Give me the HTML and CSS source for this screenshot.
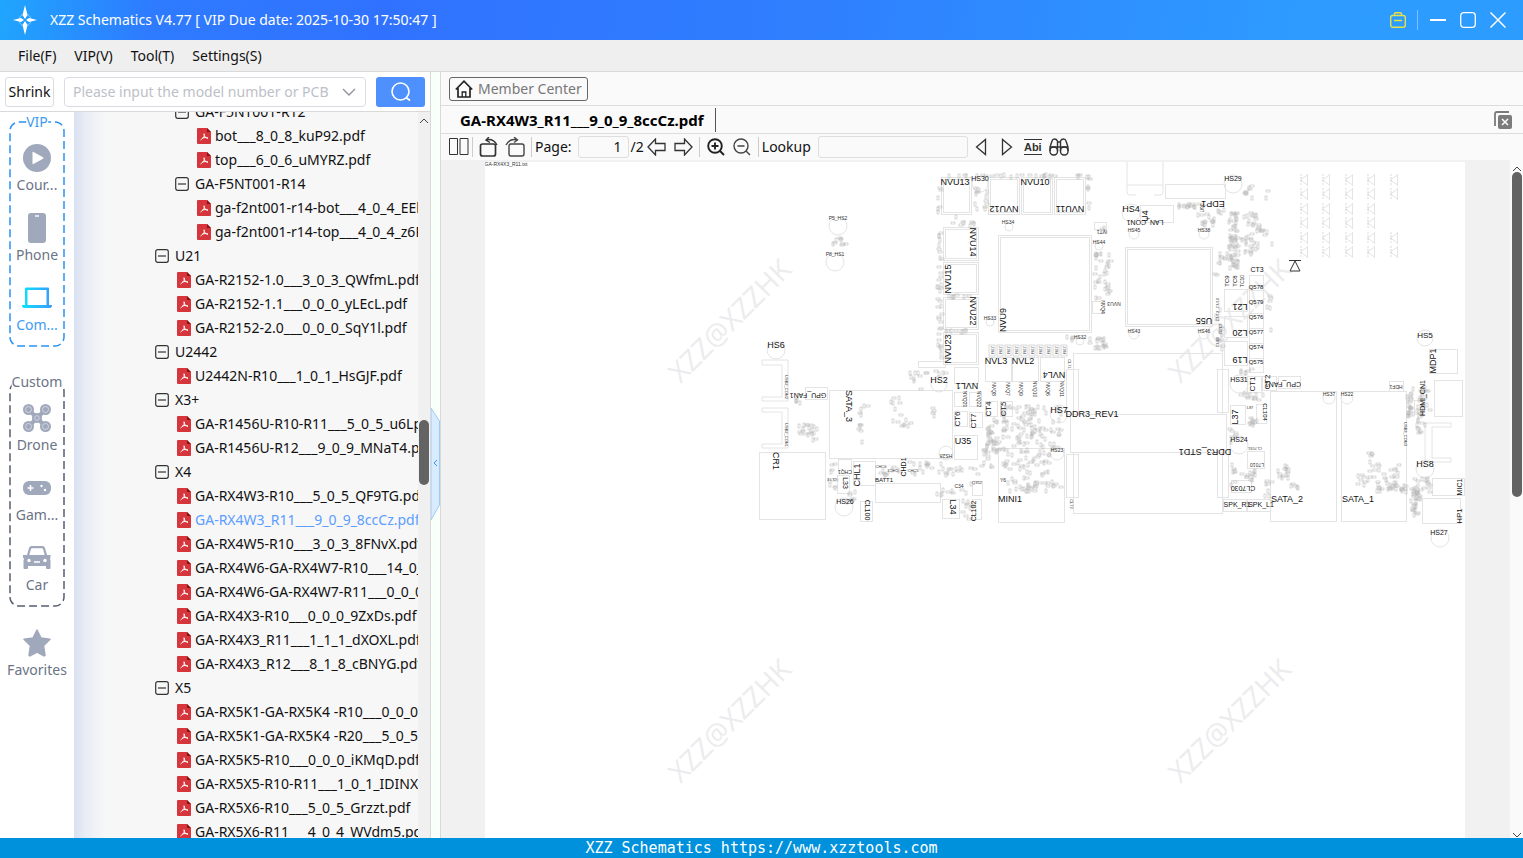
FILE: index.html
```
<!DOCTYPE html>
<html lang="en">

<head>
  <meta charset="utf-8">
  <title>XZZ Schematics V4.77</title>
  <link rel="stylesheet" href="styles.css">
</head>

<body>
  <svg class="sprite" aria-hidden="true">
    <symbol id="pdf" viewBox="0 0 14 16">
      <path d="M1 0h9l4 4v11a1 1 0 0 1-1 1H1a1 1 0 0 1-1-1V1a1 1 0 0 1 1-1z" fill="#d6353b" />
      <path d="M10 0l4 4h-4z" fill="#8e1015" />
      <path d="M7 5.5c1 2 .3 3.500-3.500 6.500M7 6c0 2.500 1.500 4 4 4.200M5.200 10.400c2-1 3.800-1.200 5.800-.2" fill="none" stroke="#fff" stroke-width="1" />
    </symbol>
    <symbol id="minus" viewBox="0 0 14 14">
      <rect x=".7" y=".7" width="12.6" height="12.6" rx="2" fill="none" stroke="#333" stroke-width="1.2" />
      <path d="M3 7h8" stroke="#333" stroke-width="1.2" />
    </symbol>
  </svg>

  <header class="titlebar">
    <svg class="logo" width="26" height="30" viewBox="0 0 26 30">
      <circle cx="13" cy="15" r="6" fill="none" stroke="#bfe0ff" stroke-width="1" opacity=".6" />
      <path d="M13 0l2.500 10-2.500 4-2.500-4zM13 30l2.500-10-2.500-4-2.500 4zM1 15l8-2 3 2-3 2zM25 15l-8-2-3 2 3 2z" fill="#fff" />
    </svg>
    <h1>XZZ Schematics V4.77 [ VIP Due date: 2025-10-30 17:50:47 ]</h1>
    <button class="win" title="Toolbox">
      <svg width="16" height="16" viewBox="0 0 16 16" fill="none" stroke="#e6e04a" stroke-width="1.4">
        <rect x=".7" y="3.5" width="14.6" height="11.8" rx="2" />
        <path d="M4.500 3.500V2q0-1.300 1.300-1.300h4.400q1.300 0 1.300 1.300v1.500M4 8.500h8" />
      </svg>
    </button>
    <span class="win-line"></span>
    <button class="win" title="Minimize">
      <svg width="16" height="16" viewBox="0 0 16 16"><path d="M0 8h16" stroke="#fff" stroke-width="2" /></svg>
    </button>
    <button class="win" title="Maximize">
      <svg width="16" height="16" viewBox="0 0 16 16"><rect x=".7" y=".7" width="14.6" height="14.6" rx="3" fill="none" stroke="#fff" stroke-width="1.3" /></svg>
    </button>
    <button class="win" title="Close">
      <svg width="16" height="16" viewBox="0 0 16 16"><path d="M.5.5l15 15M15.500.5l-15 15" stroke="#fff" stroke-width="1.5" /></svg>
    </button>
  </header>

  <nav class="menubar">
    <a href="#file">File(F)</a>
    <a href="#vip">VIP(V)</a>
    <a href="#tool">Tool(T)</a>
    <a href="#settings">Settings(S)</a>
  </nav>

  <main class="main">
    <section class="left">
      <form class="search">
        <button type="button" class="shrink">Shrink</button>
        <div class="combo">
          <input type="text" aria-label="Model number" placeholder="Please input the model number or PCB">
          <svg width="14" height="8" viewBox="0 0 14 8"><path d="M1 1l6 6 6-6" fill="none" stroke="#8f939b" stroke-width="1.4" /></svg>
        </div>
        <button type="button" class="go" title="Search">
          <svg width="20" height="20" viewBox="0 0 20 20" fill="none" stroke="#fff" stroke-width="1.6"><circle cx="9.5" cy="9.5" r="8.5" /><path d="M15 15.500l4 3" /></svg>
        </button>
      </form>

      <div class="browse">
        <nav class="side">
          <div class="group vip">
            <svg class="dash"><rect x="1" y="1" rx="9" /></svg>
            <h2>VIP</h2>
            <a href="#courses">
              <svg width="28" viewBox="0 0 28 28"><circle cx="14" cy="14" r="14" fill="#a0a8bc" /><path d="M9.500 8.500v11q0 1.200 1 .6l9.500-5.400q1-.7 0-1.400l-9.500-5.400q-1-.6-1 .6z" fill="#fff" /></svg>
              Cour...
            </a>
            <a href="#phone">
              <svg width="28" viewBox="0 0 28 30"><rect x="5" y="0" width="18" height="30" rx="3" fill="#a0a8bc" /><path d="M12 3h4" stroke="#fff" stroke-width="1.4" /></svg>
              Phone
            </a>
            <a href="#computer" class="on">
              <svg width="30" viewBox="0 0 30 22">
                <defs><linearGradient id="blue"><stop offset="0" stop-color="#08e4fb" /><stop offset="1" stop-color="#3a9bff" /></linearGradient></defs>
                <path d="M3 1.500Q3 .5 4 .5h22q1 0 1 1V18h3q0 3-2 3H2q-2 0-2-3h3zm2.500 1.500v15h19V3z" fill="url(#blue)" fill-rule="evenodd" />
              </svg>
              Com...
            </a>
          </div>

          <div class="group custom">
            <svg class="dash"><rect x="1" y="1" rx="9" /></svg>
            <h2>Custom</h2>
            <a href="#drone">
              <svg width="28" viewBox="0 0 28 28">
                <path d="M5 5l18 18M23 5L5 23" stroke="#a0a8bc" stroke-width="4" />
                <g fill="#a0a8bc"><circle cx="5.5" cy="5.5" r="5.5" /><circle cx="22.5" cy="5.5" r="5.5" /><circle cx="5.5" cy="22.5" r="5.5" /><circle cx="22.5" cy="22.5" r="5.5" /><circle cx="14" cy="14" r="5" /></g>
                <g fill="none" stroke="#e3e6ec" stroke-width=".7"><circle cx="5.5" cy="5.5" r="3" /><circle cx="22.5" cy="5.5" r="3" /><circle cx="5.5" cy="22.5" r="3" /><circle cx="22.5" cy="22.5" r="3" /><circle cx="14" cy="14" r="2.3" /></g>
              </svg>
              Drone
            </a>
            <a href="#game">
              <svg width="28" viewBox="0 0 28 14"><rect width="28" height="14" rx="6" fill="#a0a8bc" /><path d="M4.500 7h6M7.500 4v6" stroke="#fff" stroke-width="1.5" /><circle cx="18.5" cy="5" r="1.2" fill="#fff" /><circle cx="22" cy="9" r="1.2" fill="#fff" /></svg>
              Gam...
            </a>
            <a href="#car">
              <svg width="28" viewBox="0 0 28 24">
                <path d="M4 9l2-7q.6-2 2.500-2h11q2 0 2.500 2l2 7h3.500v3H27l.5 3v7q0 1-1 1h-2.500q-1 0-1-1v-2H5v2q0 1-1 1H1.500q-1 0-1-1v-7l.5-3H0V9z" fill="#a0a8bc" />
                <path d="M6.300 9l1.700-6q.2-.7 1-.7h10q.8 0 1 .7l1.700 6z" fill="#fff" />
                <circle cx="6" cy="14.5" r="1.7" fill="#fff" /><circle cx="22" cy="14.5" r="1.7" fill="#fff" /><path d="M11 16h6" stroke="#fff" stroke-width="1.5" />
              </svg>
              Car
            </a>
          </div>

          <a href="#favorites" class="favorites">
            <svg width="28" viewBox="0 0 28 28"><path d="M14 1l4 8 9 1.300-6.500 6.300L22 26q0 1-1 .8l-7-3.700-7 3.700q-1 .2-1-.8l1.500-9.400L1 10.300 10 9z" fill="#a0a8bc" stroke="#a0a8bc" stroke-width="1.5" stroke-linejoin="round" /></svg>
            Favorites
          </a>
        </nav>

        <div class="tree">
          <ul class="folders">
            <li>
              <ul class="sub">
                <li><span class="folder"><svg><use href="#minus" /></svg>GA-F5NT001-R12</span>
                  <ul>
                    <li><svg><use href="#pdf" /></svg>bot___8_0_8_kuP92.pdf</li>
                    <li><svg><use href="#pdf" /></svg>top___6_0_6_uMYRZ.pdf</li>
                  </ul>
                </li>
                <li><span class="folder"><svg><use href="#minus" /></svg>GA-F5NT001-R14</span>
                  <ul>
                    <li><svg><use href="#pdf" /></svg>ga-f2nt001-r14-bot___4_0_4_EEkQs.pdf</li>
                    <li><svg><use href="#pdf" /></svg>ga-f2nt001-r14-top___4_0_4_z6Rtm.pdf</li>
                  </ul>
                </li>
              </ul>
            </li>
            <li><span class="folder"><svg><use href="#minus" /></svg>U21</span>
              <ul>
                <li><svg><use href="#pdf" /></svg>GA-R2152-1.0___3_0_3_QWfmL.pdf</li>
                <li><svg><use href="#pdf" /></svg>GA-R2152-1.1___0_0_0_yLEcL.pdf</li>
                <li><svg><use href="#pdf" /></svg>GA-R2152-2.0___0_0_0_SqY1l.pdf</li>
              </ul>
            </li>
            <li><span class="folder"><svg><use href="#minus" /></svg>U2442</span>
              <ul>
                <li><svg><use href="#pdf" /></svg>U2442N-R10___1_0_1_HsGJF.pdf</li>
              </ul>
            </li>
            <li><span class="folder"><svg><use href="#minus" /></svg>X3+</span>
              <ul>
                <li><svg><use href="#pdf" /></svg>GA-R1456U-R10-R11___5_0_5_u6LpD.pdf</li>
                <li><svg><use href="#pdf" /></svg>GA-R1456U-R12___9_0_9_MNaT4.pdf</li>
              </ul>
            </li>
            <li><span class="folder"><svg><use href="#minus" /></svg>X4</span>
              <ul>
                <li><svg><use href="#pdf" /></svg>GA-RX4W3-R10___5_0_5_QF9TG.pdf</li>
                <li class="current"><svg><use href="#pdf" /></svg>GA-RX4W3_R11___9_0_9_8ccCz.pdf</li>
                <li><svg><use href="#pdf" /></svg>GA-RX4W5-R10___3_0_3_8FNvX.pdf</li>
                <li><svg><use href="#pdf" /></svg>GA-RX4W6-GA-RX4W7-R10___14_0_14.pdf</li>
                <li><svg><use href="#pdf" /></svg>GA-RX4W6-GA-RX4W7-R11___0_0_0.pdf</li>
                <li><svg><use href="#pdf" /></svg>GA-RX4X3-R10___0_0_0_9ZxDs.pdf</li>
                <li><svg><use href="#pdf" /></svg>GA-RX4X3_R11___1_1_1_dXOXL.pdf</li>
                <li><svg><use href="#pdf" /></svg>GA-RX4X3_R12___8_1_8_cBNYG.pdf</li>
              </ul>
            </li>
            <li><span class="folder"><svg><use href="#minus" /></svg>X5</span>
              <ul>
                <li><svg><use href="#pdf" /></svg>GA-RX5K1-GA-RX5K4 -R10___0_0_0.pdf</li>
                <li><svg><use href="#pdf" /></svg>GA-RX5K1-GA-RX5K4 -R20___5_0_5.pdf</li>
                <li><svg><use href="#pdf" /></svg>GA-RX5K5-R10___0_0_0_iKMqD.pdf</li>
                <li><svg><use href="#pdf" /></svg>GA-RX5X5-R10-R11___1_0_1_IDINX.pdf</li>
                <li><svg><use href="#pdf" /></svg>GA-RX5X6-R10___5_0_5_Grzzt.pdf</li>
                <li><svg><use href="#pdf" /></svg>GA-RX5X6-R11___4_0_4_WVdm5.pdf</li>
              </ul>
            </li>
          </ul>
        </div>

        <div class="scroll tree-scroll">
          <svg width="10" height="6" viewBox="0 0 10 6"><path d="M1 5l4-4 4 4" fill="none" stroke="#444" /></svg>
          <span class="thumb"></span>
        </div>
      </div>
    </section>

    <div class="splitter">
      <svg width="9" height="112" viewBox="0 0 9 112"><path d="M0 0l8.500 13v84L0 112z" fill="#d9ebff" stroke="#9dcbf8" /><path d="M6 52l-3 3 3 3" fill="none" stroke="#3f9bf0" /></svg>
    </div>

    <section class="right">
      <div class="member-row">
        <button class="member">
          <svg width="18" height="18" viewBox="0 0 18 18" fill="none" stroke="#222" stroke-width="1.7"><path d="M.8 9.500L9 1.200l8.200 8.300M3 8v9h12V8" /><path d="M7.200 17v-5h3.600v5" stroke-width="1.3" /></svg>
          Member Center
        </button>
      </div>

      <div class="tabs">
        <a href="#doc" class="tab">GA-RX4W3_R11___9_0_9_8ccCz.pdf</a>
        <button class="icon" title="Close all">
          <svg width="18" height="18" viewBox="0 0 18 18"><path d="M1 15V3q0-2 2-2h12" fill="none" stroke="#7b7b7b" stroke-width="1.8" /><rect x="4" y="4" width="14" height="14" rx="2" fill="#7b7b7b" /><path d="M8 8l6 6M14 8l-6 6" stroke="#fff" stroke-width="1.5" /></svg>
        </button>
      </div>

      <div class="toolbar">
        <button class="icon" title="Two pages"><svg width="20" height="18" viewBox="0 0 20 18" fill="none" stroke="#333"><path d="M.5.5h8v16h-8zM11 .5h8v16h-8z" /></svg></button>
        <i class="sep"></i>
        <button class="icon" title="Rotate left"><svg width="20" height="20" viewBox="0 0 20 20" fill="none" stroke="#333" stroke-width="1.7"><rect x="1.5" y="7" width="15" height="12" rx="2" /><path d="M7 3q7-2 11 5M10 0L7 3l4 2.500" stroke-width="1.4" /></svg></button>
        <button class="icon" title="Rotate right"><svg width="20" height="20" viewBox="0 0 20 20" fill="none" stroke="#444" stroke-width="1.4"><rect x="4" y="7" width="15" height="12" rx="2" /><path d="M1 8q4-7 11-5M9 0l3.500 3L9 5.500" /></svg></button>
        <i class="sep"></i>
        <label for="page">Page:</label>
        <input id="page" class="page-no" type="text" value="1">
        <span class="total">/2</span>
        <button class="icon" title="Previous page"><svg width="20" height="18" viewBox="0 0 20 18" fill="none" stroke="#333" stroke-width="1.3"><path d="M1 9l7.500-8v4.500H18v7H8.500V17z" /></svg></button>
        <button class="icon" title="Next page"><svg width="20" height="18" viewBox="0 0 20 18" fill="none" stroke="#333" stroke-width="1.3"><path d="M19 9l-7.500-8v4.500H2v7h9.500V17z" /></svg></button>
        <i class="sep"></i>
        <button class="icon" title="Zoom in"><svg width="18" height="18" viewBox="0 0 18 18" fill="none" stroke="#222" stroke-width="1.9"><circle cx="8" cy="8" r="6.8" /><path d="M4.500 8h7M8 4.500v7M13 13l4 4" /></svg></button>
        <button class="icon" title="Zoom out"><svg width="18" height="18" viewBox="0 0 18 18" fill="none" stroke="#444" stroke-width="1.4"><circle cx="8" cy="8" r="7" /><path d="M4.500 8h7M13 13l4 4" /></svg></button>
        <i class="sep"></i>
        <label for="lookup">Lookup</label>
        <input id="lookup" class="lookup" type="text">
        <button class="icon" title="Find previous"><svg width="12" height="18" viewBox="0 0 12 18" fill="none" stroke="#333" stroke-width="1.3"><path d="M10.500 1.500v15L1.500 9z" /></svg></button>
        <button class="icon" title="Find next"><svg width="12" height="18" viewBox="0 0 12 18" fill="none" stroke="#333" stroke-width="1.3"><path d="M1.500 1.500v15l9-7.500z" /></svg></button>
        <button class="icon abi" title="Match case">Abi</button>
        <button class="icon" title="Find all"><svg width="20" height="18" viewBox="0 0 20 18" fill="none" stroke="#333" stroke-width="1.4"><rect x="1" y="9" width="7.5" height="8" rx="3.5" /><rect x="11.5" y="9" width="7.5" height="8" rx="3.5" /><path d="M1 13V9l2-6q.5-2 2.500-2T8.500 3v10M19 13V9l-2-6q-.5-2-2.500-2t-3 2v10M1.500 9h17M8.500 4h3" /></svg></button>
      </div>

      <div class="viewer">
        <div class="paper">
          <svg id="board" viewBox="485 162 980 676" preserveAspectRatio="xMinYMin meet"></svg>
        </div>
        <div class="scroll view-scroll">
          <svg width="10" height="6" viewBox="0 0 10 6"><path d="M1 5l4-4 4 4" fill="none" stroke="#444" /></svg>
          <span class="thumb"></span>
          <svg width="10" height="6" viewBox="0 0 10 6"><path d="M1 1l4 4 4-4" fill="none" stroke="#444" /></svg>
        </div>
      </div>
    </section>
  </main>

  <footer class="footer">XZZ Schematics https://www.xzztools.com</footer>

  <script src="board.js"></script>
</body>

</html>
```

FILE: styles.css
```
* {
  box-sizing: border-box;
}

body {
  margin: 0;
  height: 100vh;
  display: flex;
  flex-direction: column;
  overflow: hidden;
  font: 14px/24px "Noto Sans", "Open Sans", sans-serif;
  color: #111;
  background: #fff;
}

button,
input {
  font: inherit;
  color: inherit;
}

a {
  color: inherit;
  text-decoration: none;
}

ul {
  list-style: none;
  margin: 0;
  padding: 0;
}

svg {
  flex: none;
  display: block;
}

.sprite {
  position: absolute;
  width: 0;
  height: 0;
}

.titlebar {
  height: 40px;
  flex: none;
  display: flex;
  align-items: center;
  padding: 0 10px 0 12px;
  color: #fff;
  background: linear-gradient(100deg, #1fa6fd 0, #2e7bff 10%, #3072ff 25%, #2f80ff 55%, #2d9bff 85%, #2d9cff 100%);
}

.titlebar h1 {
  flex: 1;
  margin: 0 0 0 12px;
  font-size: 14px;
  font-weight: 400;
}

.win {
  border: 0;
  background: none;
  padding: 0;
  width: 30px;
  display: flex;
  justify-content: center;
}

.win-line {
  width: 1px;
  height: 20px;
  margin: 0 5px 0 4px;
  background: #7fc0ff;
}

.menubar {
  height: 32px;
  flex: none;
  display: flex;
  align-items: center;
  gap: 18px;
  padding: 1px 18px 0;
  background: #efefef;
  border-bottom: 1px solid #d9d9d9;
}

.main {
  flex: 1;
  min-height: 0;
  display: flex;
}

/* left panel */

.left {
  width: 431px;
  flex: none;
  display: flex;
  flex-direction: column;
  border-right: 1px solid #d9d9d9;
}

.search {
  height: 40px;
  flex: none;
  display: flex;
  align-items: center;
  gap: 10px;
  padding: 0 5px;
  border-bottom: 1px solid #d9d9d9;
}

.shrink {
  width: 49px;
  height: 30px;
  padding: 0;
  background: #fff;
  border: 1px solid #d9dce3;
  border-radius: 3px;
}

.combo {
  flex: 1;
  display: flex;
  align-items: center;
  height: 30px;
  padding: 0 9px 0 8px;
  border: 1px solid #d9dce3;
  border-radius: 4px;
}

.combo input {
  flex: 1;
  min-width: 0;
  padding: 0;
  border: 0;
  outline: 0;
}

.combo input::placeholder {
  color: #bcc0c8;
}

.go {
  width: 49px;
  height: 30px;
  display: flex;
  align-items: center;
  justify-content: center;
  border: 0;
  border-radius: 3px;
  background: #4f90ff;
}

.browse {
  flex: 1;
  min-height: 0;
  display: flex;
}

.side {
  width: 74px;
  flex: none;
  padding: 0 9px;
  color: #6b7385;
}

.side a {
  position: relative;
  height: 70px;
  display: flex;
  flex-direction: column;
  align-items: center;
  justify-content: flex-end;
}

.side a svg {
  height: 30px;
}

.side a.on {
  color: #3d9bf0;
}

.group {
  position: relative;
  width: 56px;
  padding-bottom: 10px;
}

.group h2 {
  position: relative;
  width: max-content;
  height: 20px;
  margin: 0 -4px -5px 50%;
  transform: translateX(-50%);
  font-size: 14px;
  line-height: 20px;
  font-weight: 400;
  background: #fff;
}

.vip h2 {
  color: #3d9bf0;
}

.dash {
  position: absolute;
  left: 0;
  top: 9px;
  width: 56px;
  height: calc(100% - 9px);
}

.dash rect {
  width: calc(100% - 2px);
  height: calc(100% - 2px);
  fill: none;
  stroke: #555d70;
  stroke-width: 1.5;
  stroke-dasharray: 8 4;
}

.vip .dash rect {
  stroke: #2b92f5;
}

.custom {
  margin-top: 25px;
}

.side .favorites {
  margin: 5px -9px 0;
}

.tree {
  flex: 1;
  min-width: 0;
  overflow: hidden;
  padding-left: 80px;
  background: linear-gradient(90deg, #d8e1f1 0, #e9edf4 12px, #f7f7f8 32px);
  white-space: nowrap;
}

/* list is scrolled by half a row */
.folders {
  margin-top: -12px;
}

.sub {
  padding-left: 20px;
}

.folder,
.folder + ul li {
  display: flex;
  align-items: center;
  height: 24px;
}

.folder {
  gap: 5px;
}

.folder + ul {
  padding-left: 22px;
}

.folder + ul li {
  gap: 3px;
}

.tree svg {
  width: 16px;
  height: 14px;
}

.folder + ul svg {
  height: 16px;
}

.tree .current {
  color: #5c9dff;
}

.scroll {
  position: relative;
  flex: none;
  display: flex;
  flex-direction: column;
  align-items: center;
  justify-content: space-between;
}

.thumb {
  position: absolute;
  width: 10px;
  border-radius: 5px;
  background: #636363;
}

.tree-scroll {
  width: 12px;
  padding-top: 6px;
  background: #f0f0f0;
}

.tree-scroll .thumb {
  top: 42.4%;
  height: 9%;
}

.splitter {
  width: 9px;
  flex: none;
  display: flex;
  align-items: center;
  padding-top: 18px;
  background: #f9fff9;
}

/* document side */

.right {
  flex: 1;
  min-width: 0;
  display: flex;
  flex-direction: column;
  background: #fafafa;
  border-left: 1px solid #d9d9d9;
}

.member-row {
  height: 34px;
  flex: none;
  display: flex;
  align-items: center;
  padding-left: 8px;
  border-bottom: 1px solid #dcdcdc;
}

.member {
  height: 24px;
  display: flex;
  align-items: center;
  gap: 5px;
  padding: 0 5px;
  background: #fafafa;
  border: 1px solid #666;
  border-radius: 3px;
  color: #777;
}

.tabs {
  height: 28px;
  flex: none;
  display: flex;
  align-items: center;
  justify-content: space-between;
  padding: 0 11px 0 19px;
  border-bottom: 1px solid #dcdcdc;
}

.tab {
  padding-right: 11px;
  border-right: 1px solid #555;
  font-size: 15px;
  font-weight: 700;
  color: #000;
}

.toolbar {
  height: 26px;
  flex: none;
  display: flex;
  align-items: center;
  padding-left: 8px;
}

.icon {
  border: 0;
  padding: 0;
  background: none;
  display: flex;
}

.toolbar .icon {
  width: 26px;
  justify-content: center;
}

.toolbar .icon:first-child {
  width: 20px;
}

.sep {
  width: 1px;
  height: 20px;
  margin: 0 3px;
  background: #ccc;
}

.toolbar input {
  height: 22px;
  border: 1px solid #dedede;
  border-radius: 3px;
  background: #fafafa;
}

.page-no {
  width: 51px;
  margin-left: 6px;
  padding: 0 6px;
  text-align: right;
}

.total {
  padding-left: 2px;
}

.lookup {
  width: 150px;
  margin-left: 7px;
}

.toolbar .abi {
  width: 18px;
  height: 16px;
  margin: 0 4px;
  border-top: 1px solid #333;
  border-bottom: 1px solid #333;
  font: 700 11px/14px "Liberation Sans", sans-serif;
  color: #333;
}

.viewer {
  flex: 1;
  min-height: 0;
  display: flex;
  padding-left: 44px;
  background: #f1f1f1;
}

.paper {
  flex: 1;
  min-width: 0;
  margin: 2px 45px 0 0;
  background: #fff;
  overflow: hidden;
}

#board {
  width: 100%;
}

#board text {
  font-family: "Liberation Sans", Arial, sans-serif;
  text-anchor: middle;
  dominant-baseline: central;
  fill: #111;
}

#board .small {
  fill: #333;
}

#board .mark {
  font: 400 28px "Open Sans", sans-serif;
  fill: #ececee;
}

#board .line {
  fill: none;
  stroke: #e4e4e4;
}

#board .part {
  fill: none;
  stroke: #b4b4b4;
  stroke-width: .5;
}

.view-scroll {
  width: 13px;
  padding: 6px 0 0;
  background: #fafafa;
}

.view-scroll .thumb {
  top: 12px;
  height: 48%;
}

.footer {
  height: 20px;
  flex: none;
  background: #0091dc;
  color: #fff;
  text-align: center;
  font: 15px/20px "DejaVu Sans Mono", monospace;
}
```

FILE: board.js
```
var board = document.getElementById('board');
var NS = 'http://www.w3.org/2000/svg';

function add(tag, attrs, text) {
  var el = document.createElementNS(NS, tag);
  for (var key in attrs) {
    el.setAttribute(key, attrs[key]);
  }
  if (text) {
    el.textContent = text;
  }
  board.appendChild(el);
}

// fixed seed, so the small parts always land in the same place
var seed = 7;
function rand() {
  seed = (seed * 16807) % 2147483647;
  return seed / 2147483647;
}

// watermarks
[[729, 320], [1229, 320], [729, 720], [1229, 720]].forEach(p => {
  add('text', { class: 'mark', x: p[0], y: p[1], transform: `rotate(-45 ${p[0]} ${p[1]})` }, 'XZZ@XZZHK');
});

// chips with a double outline: x, y, w, h
[
  [941, 177, 30, 37], [988, 177, 31, 37], [1021, 177, 31, 37], [1054, 177, 31, 37],
  [943, 227, 35, 33], [943, 262, 35, 32], [943, 297, 35, 32], [943, 332, 35, 32],
  [998, 235, 93, 97], [1125, 247, 87, 79]
].forEach(r => {
  add('rect', { class: 'line', x: r[0] + .5, y: r[1] + .5, width: r[2], height: r[3] });
  add('rect', { class: 'line', x: r[0] + 2.5, y: r[1] + 2.5, width: r[2] - 4, height: r[3] - 4 });
});

// plain outlines
[
  [829, 390, 123, 68], [759, 452, 66, 67], [853, 461, 22, 24], [875, 483, 65, 19], [805, 387, 22, 12],
  [838, 459, 13, 14], [837, 475, 12, 18], [954, 435, 23, 24], [998, 448, 66, 74], [985, 357, 26, 24],
  [1012, 357, 26, 24], [1040, 357, 24, 24], [954, 367, 24, 16], [942, 499, 17, 19], [860, 501, 12, 20],
  [972, 499, 9, 20], [972, 481, 10, 14], [954, 392, 12, 14], [969, 392, 12, 14], [954, 411, 13, 15],
  [969, 412, 13, 15], [985, 401, 12, 15], [1000, 401, 12, 15], [1073, 353, 149, 61], [1073, 452, 149, 61],
  [1066, 369, 12, 45], [1066, 454, 12, 43], [1217, 369, 11, 43], [1217, 450, 11, 47], [1070, 414, 156, 38],
  [1165, 184, 60, 14], [1140, 205, 33, 17], [1094, 222, 12, 7], [1092, 301, 12, 12], [1249, 275, 14, 15],
  [1249, 290, 14, 23], [1249, 313, 14, 15], [1249, 328, 14, 15], [1249, 343, 14, 15], [1249, 358, 14, 14],
  [1224, 289, 23, 22], [1224, 316, 23, 21], [1224, 341, 23, 24], [1230, 405, 15, 19], [1247, 376, 14, 16],
  [1278, 376, 22, 12], [1262, 376, 14, 14], [1256, 404, 10, 19], [1247, 451, 17, 17], [1231, 480, 20, 12],
  [1223, 499, 23, 12], [1247, 499, 23, 12], [1270, 391, 66, 130], [1341, 391, 65, 130], [1429, 349, 28, 24],
  [1434, 380, 28, 36], [1389, 381, 14, 10], [1432, 478, 32, 17], [1422, 498, 38, 25], [918, 361, 27, 6],
  [1414, 400, 8, 14]
].forEach(r => add('rect', { class: 'line', x: r[0] + .5, y: r[1] + .5, width: r[2], height: r[3] }));

// connectors
[
  'M762 360h26v41h-26v-4h20v-32h-20z',
  'M762 408h26v40h-26v-4h20v-32h-20z',
  'M1425 423h26v4h-19v31h19v4h-26z',
  'M1127 162v30q0 3 3 3h6M1163 162v30q0 3-3 3h-6M1127 185h36'
].forEach(d => add('path', { class: 'line', d: d }));

// screw holes: x, y, r
[
  [980, 184, 8], [838, 226, 9], [835, 262, 9], [1009, 227, 4], [990, 322, 4], [1099, 246, 4], [1080, 341, 4],
  [776, 350, 9], [939, 384, 8], [844, 507, 9], [946, 453, 7], [1059, 414, 9], [1057, 453, 7], [1131, 213, 9],
  [1233, 184, 9], [1134, 234, 5], [1204, 234, 5], [1134, 334, 5], [1204, 334, 5], [1239, 384, 9],
  [1239, 445, 9], [1425, 338, 8], [1425, 469, 9], [1440, 538, 9], [1329, 398, 6], [1347, 398, 6]
].forEach(c => add('circle', { class: 'line', cx: c[0], cy: c[1], r: c[2] }));

// areas filled with small parts: x, y, w, h, count
[
  [940, 173, 150, 2, 26], [937, 182, 2, 30, 6], [973, 185, 3, 25, 7], [983, 190, 3, 18, 6], [1085, 174, 3, 32, 8],
  [936, 228, 4, 30, 9], [936, 264, 4, 28, 9], [936, 298, 4, 30, 10], [937, 333, 4, 25, 8], [944, 214, 30, 10, 9],
  [945, 294, 25, 1, 7], [945, 329, 28, 1, 8], [1093, 250, 16, 50, 34], [1088, 334, 18, 14, 18],
  [1064, 334, 12, 6, 4], [797, 422, 20, 18, 20], [789, 398, 10, 3, 4], [856, 392, 12, 20, 3], [857, 410, 4, 32, 8],
  [889, 396, 12, 18, 7], [891, 418, 18, 8, 8], [908, 368, 12, 20, 8], [922, 370, 24, 3, 6], [931, 406, 6, 12, 4],
  [985, 418, 13, 34, 32], [1000, 405, 46, 36, 70], [1002, 440, 46, 50, 70], [1048, 405, 14, 46, 16],
  [980, 440, 14, 26, 14], [1022, 480, 40, 10, 14], [876, 461, 10, 14, 6], [888, 466, 10, 6, 4],
  [908, 460, 24, 12, 10], [828, 460, 8, 36, 9], [845, 490, 12, 12, 7], [922, 460, 24, 14, 7],
  [944, 466, 34, 8, 12], [940, 480, 36, 12, 7], [958, 498, 14, 20, 10], [935, 490, 8, 6, 3],
  [1174, 202, 24, 4, 14], [1194, 212, 20, 12, 14], [1216, 205, 8, 8, 4], [1228, 212, 9, 54, 60],
  [1238, 210, 18, 6, 7], [1246, 218, 12, 30, 16], [1240, 234, 16, 18, 14], [1258, 228, 16, 14, 7],
  [1242, 184, 26, 14, 10], [1218, 252, 8, 12, 7], [1212, 258, 6, 18, 3], [1215, 298, 7, 50, 12],
  [1266, 290, 4, 40, 6], [1238, 366, 16, 5, 6], [1238, 392, 24, 8, 12], [1248, 416, 10, 8, 10],
  [1228, 422, 10, 18, 7], [1240, 468, 20, 12, 12], [1230, 460, 4, 30, 7], [1264, 476, 6, 24, 7],
  [1276, 462, 12, 14, 14], [1286, 483, 12, 3, 5], [1406, 392, 4, 22, 20], [1412, 386, 16, 30, 24],
  [1411, 418, 14, 14, 10], [1367, 450, 12, 34, 14], [1355, 474, 12, 12, 8], [1382, 464, 16, 24, 18],
  [1376, 483, 30, 7, 20], [1410, 482, 9, 32, 28], [1412, 476, 18, 16, 18], [832, 236, 12, 10, 9],
  [1100, 226, 6, 4, 3]
].forEach(a => {
  for (var i = 0; i < a[4]; i++) {
    var tall = rand() > .5;
    add('rect', {
      class: 'part',
      x: Math.round(a[0] + rand() * a[2]),
      y: Math.round(a[1] + rand() * a[3]),
      width: tall ? 2 : 4,
      height: tall ? 4 : 2
    });
  }
});

// resistor row above the inductors
for (var x = 989; x < 1064; x += 8) {
  add('rect', { class: 'part', x: x, y: 345, width: 6, height: 11 });
  add('text', { class: 'small', x: x + 3, y: 350, 'font-size': 4, transform: `rotate(-90 ${x + 3} 350)` }, 'R67');
}

// LED matrix on the right
[1303, 1325, 1348, 1370, 1393].forEach((cx, col) => {
  [180, 194, 209, 223, 238, 252].forEach((cy, row) => {
    if (col === 4 && (row === 2 || row === 3)) {
      return;
    }
    add('path', { class: 'line', d: `M${cx + 4.5} ${cy - 6}v12M${cx + 4.5} ${cy - 5}l-7 5 7 5` });
    add('path', { class: 'part', 'stroke-dasharray': '2 1', d: `M${cx - 2} ${cy - 6}v12` });
  });
});
add('path', { d: 'M1289 260.5h12M1295 261l-5 10h10z', fill: 'none', stroke: '#333' });

// text, x, y, size, rotation
[
  ['NVU13', 955, 182, 9, 0], ['HS30', 980, 178, 7, 0], ['NVU12', 1004, 209, 9, 180], ['NVU10', 1035, 182, 9, 0],
  ['NVU11', 1070, 209, 9, 180], ['P5_HS2', 838, 218, 5, 0], ['P8_HS1', 835, 254, 5, 0], ['HS34', 1008, 222, 5, 0],
  ['NVU14', 973, 242, 9, 90], ['NVU15', 948, 279, 9, -90], ['NVU22', 973, 311, 9, 90], ['NVU23', 948, 349, 9, -90],
  ['NVU9', 1003, 320, 9, -90], ['HS33', 990, 318, 5, 0], ['HS44', 1099, 242, 5, 0], ['HS32', 1080, 337, 5, 0],
  ['IVT1', 1102, 232, 5, 180], ['NVQ4', 1103, 307, 5, 90], ['NVU3', 1114, 304, 5, 180], ['NVL3', 996, 361, 9, 0],
  ['NVL2', 1023, 361, 9, 0], ['NVL4', 1054, 375, 9, 180], ['NVL1', 967, 386, 9, 180], ['HS6', 776, 345, 9, 0],
  ['HS2', 939, 380, 9, 0], ['HS7', 1059, 410, 9, 0], ['HS26', 845, 501, 7, 0], ['HS28', 946, 456, 5, 180],
  ['HS23', 1057, 450, 5, 0], ['GPU_FAN1', 808, 395, 7, 180], ['SATA_3', 849, 406, 9, 90], ['CR1', 776, 461, 9, 90],
  ['CHL1', 857, 475, 9, -90], ['L33', 845, 483, 7, 90], ['CHD1', 903, 467, 7, -90], ['BATT1', 884, 480, 6, 0],
  ['CL100', 867, 510, 7, 90], ['L34', 953, 507, 9, 90], ['CL102', 973, 511, 7, -90], ['C34', 959, 486, 5, 0],
  ['Q352', 977, 482, 4, 0], ['CT4', 988, 409, 8, -90], ['CT5', 1003, 409, 8, -90], ['CT6', 957, 419, 8, -90],
  ['CT7', 973, 421, 8, -90], ['U35', 963, 441, 9, 0], ['MINI1', 1010, 499, 9, 0], ['Y6', 1003, 480, 5, 0],
  ['NVQ8', 994, 389, 5, 90], ['NVQ7', 1008, 389, 5, 90], ['NVQ9', 1021, 389, 5, 90], ['NVQ10', 1035, 389, 5, 90],
  ['NVQ6', 1048, 389, 5, 90], ['NVQ11', 1062, 389, 5, 90], ['NVQ20', 965, 399, 5, 90], ['NVQ22', 979, 399, 5, 90],
  ['USB2_CON2', 786, 387, 4, 90], ['USB2_CON1', 786, 435, 4, 90], ['CHQ1', 845, 472, 5, 180],
  ['CHC3', 893, 470, 4, 180], ['CHC6', 881, 466, 4, 0], ['CHC5', 913, 470, 4, 0], ['CL74', 832, 479, 4, 180],
  ['CL71', 1069, 364, 4, 90], ['CL72', 1071, 504, 4, 90], ['DDR3_REV1', 1092, 414, 9, 0],
  ['DDR3_STD1', 1205, 452, 9, 180], ['L19', 1240, 360, 9, 180], ['L20', 1240, 333, 9, 180], ['L21', 1240, 307, 9, 180],
  ['Q578', 1256, 287, 6, 0], ['Q579', 1256, 302, 6, 0], ['Q576', 1256, 317, 6, 0], ['Q577', 1256, 332, 6, 0],
  ['Q574', 1256, 347, 6, 0], ['Q575', 1256, 362, 6, 0], ['TC9', 1227, 281, 6, -90], ['TC8', 1235, 281, 6, -90],
  ['TC10', 1242, 281, 5, -90], ['CT3', 1257, 269, 7, 0], ['HS31', 1239, 379, 7, 0], ['HS24', 1239, 439, 7, 0],
  ['CT1', 1252, 384, 8, -90], ['CT2', 1267, 382, 8, -90], ['CPU_FAN1', 1283, 384, 7, 180], ['L37', 1235, 417, 9, -90],
  ['L87', 1250, 407, 4, 0], ['CL104', 1265, 412, 6, 90], ['CL7030', 1243, 488, 7, 180], ['L7010', 1257, 465, 5, 180],
  ['CL7031', 1255, 448, 4, 180], ['SPK_R1', 1237, 504, 7, 0], ['SPK_L1', 1261, 504, 7, 0], ['HS4', 1131, 209, 9, 0],
  ['U4', 1145, 216, 9, -90], ['LAN_CON1', 1145, 222, 7, 180], ['EDP1', 1213, 204, 9, 180], ['U90', 1202, 208, 5, -90],
  ['HS29', 1233, 178, 7, 0], ['HS45', 1134, 230, 5, 0], ['HS38', 1204, 230, 5, 0], ['HS43', 1134, 331, 5, 0],
  ['HS46', 1204, 331, 5, 0], ['U55', 1204, 321, 9, 180], ['CU10', 1217, 303, 4, -90], ['CU12', 1217, 316, 4, -90],
  ['CU31', 1220, 329, 4, 90], ['CU60', 1217, 342, 4, -90], ['HS5', 1425, 335, 8, 0], ['MDP1', 1433, 361, 9, -90],
  ['HDMI_CN1', 1422, 398, 7, -90], ['USB3_CON3', 1405, 434, 4, 90], ['HDF1', 1396, 387, 5, 180],
  ['MIC1', 1459, 487, 7, -90], ['HP1', 1459, 516, 8, -90], ['HS27', 1439, 532, 7, 0], ['HS8', 1425, 464, 9, 0],
  ['SATA_2', 1287, 499, 9, 0], ['SATA_1', 1358, 499, 9, 0], ['HS37', 1329, 394, 5, 0], ['HS22', 1347, 394, 5, 0],
  ['GA-RX4X3_R11.txt', 506, 164, 5, 0]
].forEach(t => {
  add('text', {
    class: t[3] < 6 ? 'small' : 'name',
    x: t[1],
    y: t[2],
    'font-size': t[3],
    transform: `rotate(${t[4]} ${t[1]} ${t[2]})`
  }, t[0]);
});
```
